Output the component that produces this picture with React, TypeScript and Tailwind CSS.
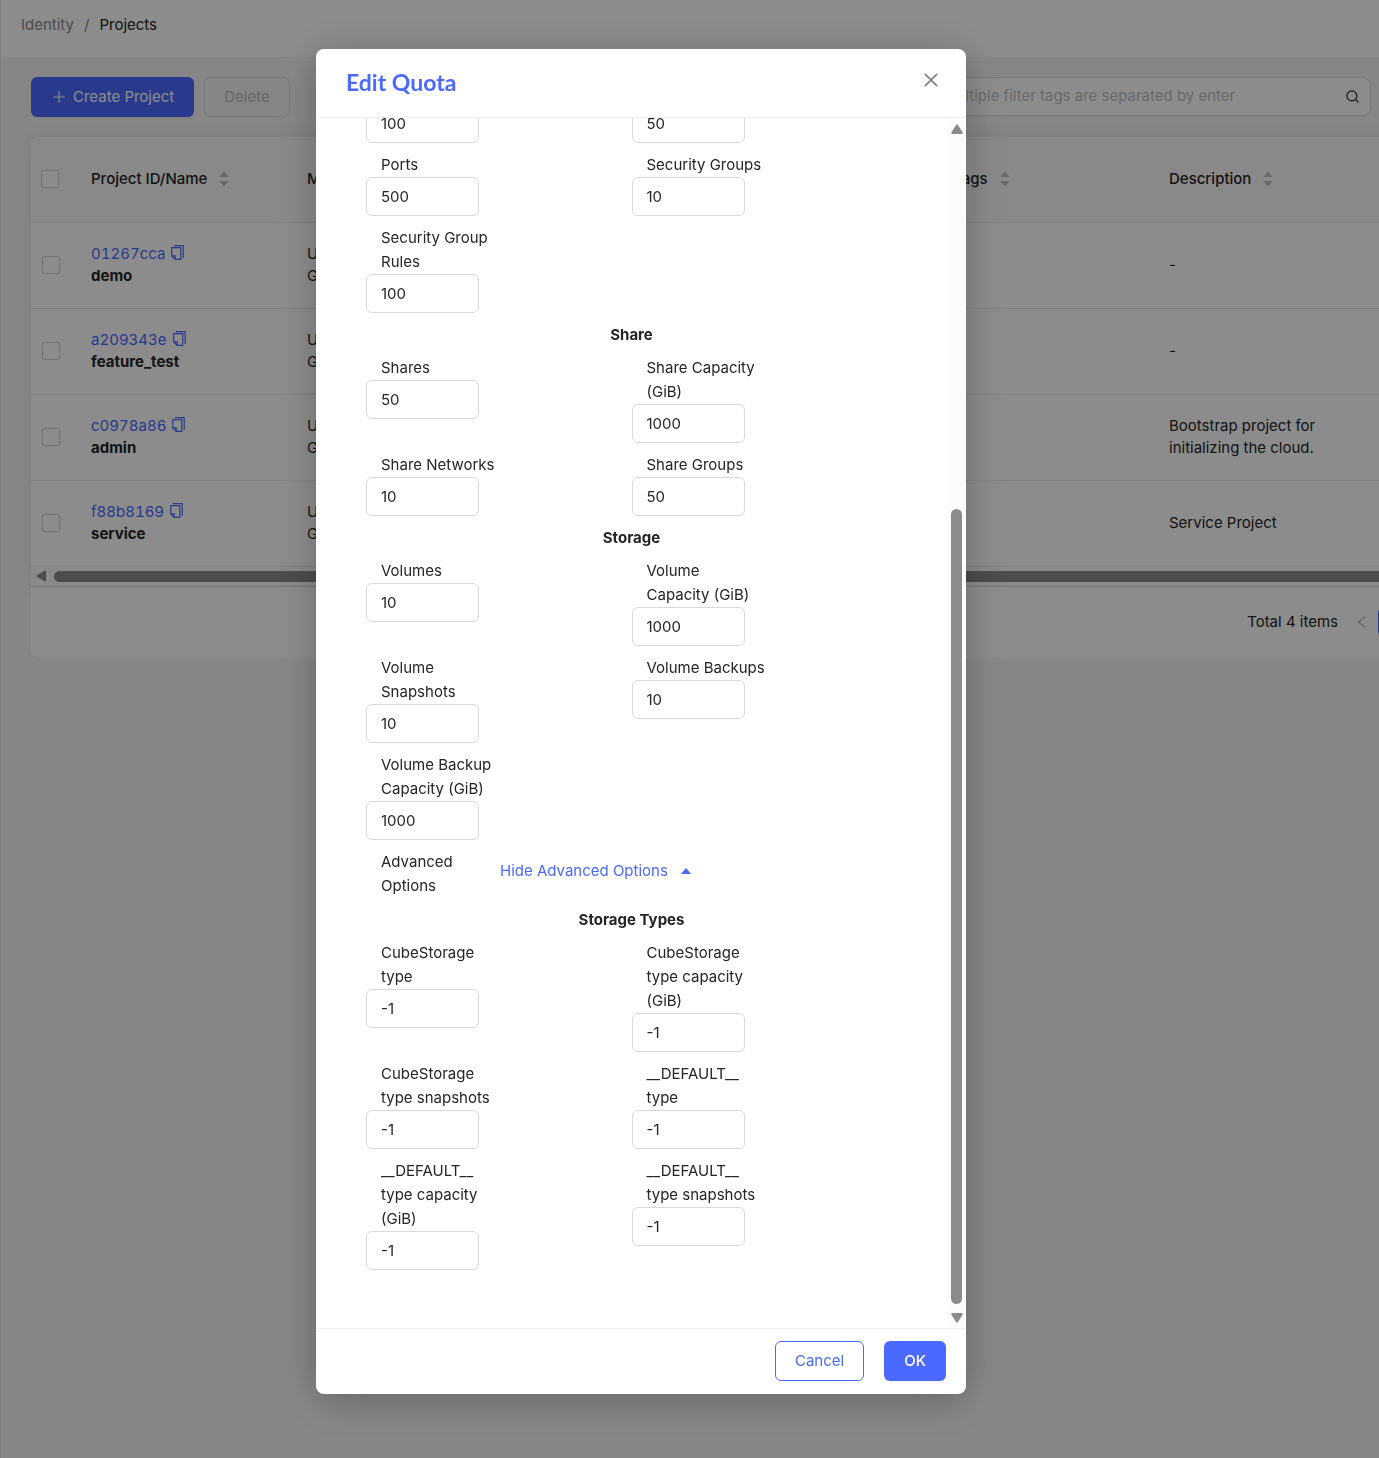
import { useEffect, useRef } from 'react';
import {
  AiFillCaretUp,
  AiOutlineClose,
  AiOutlineLeft,
  AiOutlinePlus,
} from 'react-icons/ai';
import { Search } from 'lucide-react';

interface Project {
  id: string;
  name: string;
  description: string;
}

interface QuotaField {
  label: string;
  value: string;
}

const PROJECTS: Project[] = [
  { id: '01267cca', name: 'demo', description: '-' },
  { id: 'a209343e', name: 'feature_test', description: '-' },
  { id: 'c0978a86', name: 'admin', description: 'Bootstrap project for initializing the cloud.' },
  { id: 'f88b8169', name: 'service', description: 'Service Project' },
];

const NETWORK_FIELDS: QuotaField[] = [
  { label: 'Subnets', value: '100' },
  { label: 'Floating IPs', value: '50' },
  { label: 'Ports', value: '500' },
  { label: 'Security Groups', value: '10' },
  { label: 'Security Group Rules', value: '100' },
];

const SHARE_FIELDS: QuotaField[] = [
  { label: 'Shares', value: '50' },
  { label: 'Share Capacity (GiB)', value: '1000' },
  { label: 'Share Networks', value: '10' },
  { label: 'Share Groups', value: '50' },
];

const STORAGE_FIELDS: QuotaField[] = [
  { label: 'Volumes', value: '10' },
  { label: 'Volume Capacity (GiB)', value: '1000' },
  { label: 'Volume Snapshots', value: '10' },
  { label: 'Volume Backups', value: '10' },
  { label: 'Volume Backup Capacity (GiB)', value: '1000' },
];

const STORAGE_TYPE_FIELDS: QuotaField[] = [
  { label: 'CubeStorage type', value: '-1' },
  { label: 'CubeStorage type capacity (GiB)', value: '-1' },
  { label: 'CubeStorage type snapshots', value: '-1' },
  { label: '__DEFAULT__ type', value: '-1' },
  { label: '__DEFAULT__ type capacity (GiB)', value: '-1' },
  { label: '__DEFAULT__ type snapshots', value: '-1' },
];

export default function App() {
  return (
    <div className="min-h-screen overflow-hidden border-l border-[#ececec] bg-[#f5f5f6] font-['Inter',sans-serif] text-[15px] text-[#252525]">
      <Breadcrumb />
      <main className="pt-5 pl-[30px]">
        <Toolbar />
        <ProjectTable />
        <Pagination />
      </main>
      <EditQuotaModal />
    </div>
  );
}

function Breadcrumb() {
  return (
    <nav aria-label="Breadcrumb" className="flex h-[57px] gap-[10px] bg-white pt-[13px] pl-5 leading-6">
      <a href="#identity" className="text-[#8c8c8c]">Identity</a>
      <span className="text-[#8c8c8c]">/</span>
      <a href="#projects">Projects</a>
    </nav>
  );
}

function Toolbar() {
  return (
    <div className="mb-5 flex items-start gap-[10px] pr-2">
      <button
        type="button"
        className="flex h-10 items-center gap-[6px] rounded-md bg-[#4c69ff] px-5 text-white shadow-[0_2px_0_rgba(0,0,0,0.04)]"
      >
        <AiOutlinePlus className="size-4" />
        Create Project
      </button>
      <button
        type="button"
        disabled
        className="h-10 rounded-md border border-[#d9d9d9] bg-[#f5f5f5] px-[19px] text-[#b8b8b8]"
      >
        Delete
      </button>
      <div className="ml-auto flex h-[39px] w-[443px] items-center rounded-lg border border-[#d9d9d9] bg-white pr-[10px] pl-[14px]">
        <input
          type="text"
          aria-label="Filter projects"
          placeholder="Multiple filter tags are separated by enter"
          className="min-w-0 flex-1 outline-none placeholder:text-[#bfbfbf]"
        />
        <button type="button" aria-label="Search">
          <Search className="size-[15px]" strokeWidth={2} />
        </button>
      </div>
    </div>
  );
}

function ProjectTable() {
  return (
    <div className="-mr-10 rounded-t-lg border-b border-[#d5d5de] bg-white shadow-[0_0_20px_rgba(60,60,150,0.10)]">
      <table className="w-full table-fixed text-left leading-[22px]">
        <colgroup>
          <col className="w-[50px]" />
          <col className="w-[216px]" />
          <col className="w-[646px]" />
          <col className="w-[216px]" />
          <col />
        </colgroup>
        <thead>
          <tr className="h-[85px] border-b border-[#ececec] bg-[#fafafa]">
            <th className="rounded-tl-lg px-[10px]">
              <CheckBox label="Select all" />
            </th>
            <HeaderCell title="Project ID/Name" />
            <HeaderCell title="Member Num" />
            <HeaderCell title="Tags" />
            <HeaderCell title="Description" />
          </tr>
        </thead>
        <tbody>
          {PROJECTS.map((project) => (
            <tr key={project.id} className="h-[86px] border-b border-[#ececec]">
              <td className="pl-[11px]">
                <CheckBox label={`Select ${project.name}`} />
              </td>
              <td className="px-[10px]">
                <div className="flex items-center gap-[6px]">
                  <a href={`#${project.id}`} className="text-[#4c69ff] tabular-nums">
                    {project.id}
                  </a>
                  <button type="button" aria-label="Copy ID" className="pb-[3px] text-[#4c69ff]">
                    <CopyIcon />
                  </button>
                </div>
                <div className="font-bold">{project.name}</div>
              </td>
              <td className="px-[10px]">
                <div>User</div>
                <div>Group</div>
              </td>
              <td />
              <td className="px-[10px]">
                <div className="w-[170px]">{project.description}</div>
              </td>
            </tr>
          ))}
        </tbody>
      </table>
      <div className="flex h-[19px] items-center gap-2 bg-[#fafafa] pl-[5px]">
        <svg className="h-3 w-[10px] shrink-0 text-[#8b8b8b]" viewBox="0 0 10 12" fill="currentColor">
          <path d="M9 0.6 Q10 0 10 1.2 V10.8 Q10 12 9 11.4 L1 6.8 Q0 6 1 5.2 Z" />
        </svg>
        <div className="h-[11px] flex-1 rounded-full bg-[#8b8b8b]" />
      </div>
    </div>
  );
}

function HeaderCell({ title }: { title: string }) {
  return (
    <th className="px-[10px] font-medium">
      <div className="flex items-center gap-3">
        {title}
        <svg className="h-4 w-[10px] text-[#bfbfbf]" viewBox="0 0 10 16" fill="currentColor">
          <path d="M5 0.5 L9.6 6 H0.4 Z M5 15.5 L0.4 10 H9.6 Z" />
        </svg>
      </div>
    </th>
  );
}

function CheckBox({ label }: { label: string }) {
  return (
    <input
      type="checkbox"
      aria-label={label}
      className="block size-[18px] appearance-none rounded-[2px] border border-[#d0d0d0] bg-white"
    />
  );
}

function CopyIcon() {
  return (
    <svg className="h-[15px] w-[13px]" viewBox="0 0 13 15" fill="none" stroke="currentColor" strokeWidth={1.2}>
      <path d="M3 0.7 H12.2 V13" />
      <path d="M0.8 2.6 H9.8 V14.3 H4.2 L0.8 11 Z" />
      <path d="M0.8 10.9 H4.2 V14.3" />
    </svg>
  );
}

function Pagination() {
  return (
    <div className="-mr-10 flex h-[71px] items-center justify-end rounded-b-lg bg-white pr-[9px]">
      <span>Total 4 items</span>
      <button type="button" aria-label="Previous page" className="ml-2 flex w-8 justify-center text-[#b8b8b8]">
        <AiOutlineLeft className="size-4" />
      </button>
      <button type="button" className="h-7 w-8 rounded-sm border border-[#4c69ff] text-[#4c69ff]">1</button>
    </div>
  );
}

/**
 * Quota dialog over the page, opened at the end of its form.
 */
function EditQuotaModal() {
  const bodyRef = useRef<HTMLDivElement>(null);

  useEffect(() => {
    if (bodyRef.current) {
      bodyRef.current.scrollTop = bodyRef.current.scrollHeight;
    }
  }, []);

  return (
    <div className="fixed inset-0 flex items-start bg-black/45 pt-[49px] pb-16 pl-[316px]">
      <div
        role="dialog"
        aria-labelledby="quota-title"
        className="flex max-h-full w-[650px] flex-col rounded-lg bg-white shadow-[0_6px_40px_rgba(0,0,0,0.25)]"
      >
        <header className="flex items-start justify-between border-b border-[#f0f0f0] pt-[17px] pr-[25px] pb-[19px] pl-[30px]">
          <h2 id="quota-title" className="font-['Lato',sans-serif] text-[23px] leading-8 font-bold text-[#4c69ff]">
            Edit Quota
          </h2>
          <button type="button" aria-label="Close" className="pt-1 text-[#808080]">
            <AiOutlineClose className="size-5" />
          </button>
        </header>

        <div className="flex min-h-0 flex-1">
          <div ref={bodyRef} className="min-w-0 flex-1 overflow-y-auto px-[50px] pt-5 pb-12 leading-6 [scrollbar-width:none]">
            <FieldGrid fields={NETWORK_FIELDS} />
            <SectionTitle title="Share" />
            <FieldGrid fields={SHARE_FIELDS} />
            <SectionTitle title="Storage" />
            <FieldGrid fields={STORAGE_FIELDS} />
            <div className="mb-[10px] flex items-start pl-[15px]">
              <span className="w-[119px] pr-6">Advanced Options</span>
              <button type="button" className="flex items-center gap-[11px] pt-[9px] text-[#4c69ff]">
                Hide Advanced Options
                <AiFillCaretUp className="size-[14px]" />
              </button>
            </div>
            <SectionTitle title="Storage Types" />
            <FieldGrid fields={STORAGE_TYPE_FIELDS} />
          </div>
          <ScrollTrack />
        </div>

        <footer className="flex justify-end gap-5 border-t border-[#f0f0f0] px-5 pt-3 pb-[13px]">
          <button type="button" className="h-10 rounded-md border border-[#4c69ff] px-[19px] text-[#4c69ff]">
            Cancel
          </button>
          <button
            type="button"
            className="h-10 rounded-md bg-[#4c69ff] px-5 font-medium text-white shadow-[0_2px_0_rgba(0,0,0,0.04)]"
          >
            OK
          </button>
        </footer>
      </div>
    </div>
  );
}

function SectionTitle({ title }: { title: string }) {
  return <h3 className="mb-[9px] text-center font-bold">{title}</h3>;
}

function FieldGrid({ fields }: { fields: QuotaField[] }) {
  return (
    <div className="grid grid-cols-2">
      {fields.map((field) => {
        const id = field.label.toLowerCase().replace(/[^a-z]+/g, '-');
        return (
          <div key={id} className="mb-[10px]">
            <label htmlFor={id} className="block w-[134px] pl-[15px]">
              {field.label}
            </label>
            <input
              id={id}
              type="text"
              defaultValue={field.value}
              className="block h-[39px] w-[113px] rounded-md border border-[#d9d9d9] px-[14px] outline-none"
            />
          </div>
        );
      })}
    </div>
  );
}

function ScrollTrack() {
  return (
    <div className="flex w-[19px] flex-col items-center bg-[#fcfcfc] pt-[6px] pb-[5px] text-[#8b8b8b]">
      <svg className="h-[10px] w-3 shrink-0" viewBox="0 0 12 10" fill="currentColor">
        <path d="M5.2 0.8 Q6 0 6.8 0.8 L11.7 8.4 Q12 10 10.8 10 H1.2 Q0 10 0.3 8.4 Z" />
      </svg>
      <div className="flex w-full flex-1 flex-col items-center pt-1 pb-[9px]">
        <div className="flex-[371]" />
        <div className="w-[11px] flex-[795] rounded-full bg-[#8b8b8b]" />
      </div>
      <svg className="h-[10px] w-3 shrink-0" viewBox="0 0 12 10" fill="currentColor">
        <path d="M5.2 9.2 Q6 10 6.8 9.2 L11.7 1.6 Q12 0 10.8 0 H1.2 Q0 0 0.3 1.6 Z" />
      </svg>
    </div>
  );
}
